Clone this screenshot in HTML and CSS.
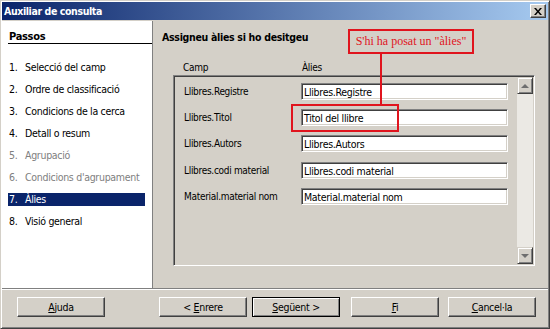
FILE: index.html
```html
<!DOCTYPE html>
<html lang="ca">
<head>
    <meta charset="UTF-8">
    <title>Auxiliar de consulta</title>
    <link rel="stylesheet" href="styles.css">
</head>
<body>
    <div class="window">
        <div class="titlebar">
            <span class="title">Auxiliar de consulta</span>
            <button class="close" aria-label="Tanca">
                <svg width="8" height="7" viewBox="0 0 8 7">
                    <path d="M0 0h2l2 2.5L6 0h2L5 3.5 8 7H6L4 4.5 2 7H0l3-3.5z" fill="#000"/>
                </svg>
            </button>
        </div>

        <div class="main">
            <nav class="steps">
                <div class="steps-title">Passos</div>
                <ol class="step-list">
                    <li class="step"><span class="step-label"><span class="num">1.</span>Selecció del camp</span></li>
                    <li class="step"><span class="step-label"><span class="num">2.</span>Ordre de classificació</span></li>
                    <li class="step"><span class="step-label"><span class="num">3.</span>Condicions de la cerca</span></li>
                    <li class="step"><span class="step-label"><span class="num">4.</span>Detall o resum</span></li>
                    <li class="step disabled"><span class="step-label"><span class="num">5.</span>Agrupació</span></li>
                    <li class="step disabled"><span class="step-label"><span class="num">6.</span>Condicions d'agrupament</span></li>
                    <li class="step current"><span class="step-label"><span class="num">7.</span>Àlies</span></li>
                    <li class="step"><span class="step-label"><span class="num">8.</span>Visió general</span></li>
                </ol>
            </nav>

            <section class="content">
                <div class="content-title">Assigneu àlies si ho desitgeu</div>
                <div class="columns">
                    <span>Camp</span>
                    <span>Àlies</span>
                </div>
                <div class="alias-box">
                    <div class="alias-rows">
                        <div class="alias-row">
                            <span class="field">Llibres.Registre</span>
                            <span class="text-input">Llibres.Registre</span>
                        </div>
                        <div class="alias-row">
                            <span class="field">Llibres.Titol</span>
                            <span class="text-input">Titol del llibre</span>
                        </div>
                        <div class="alias-row">
                            <span class="field">Llibres.Autors</span>
                            <span class="text-input">Llibres.Autors</span>
                        </div>
                        <div class="alias-row">
                            <span class="field">Llibres.codi material</span>
                            <span class="text-input">Llibres.codi material</span>
                        </div>
                        <div class="alias-row">
                            <span class="field">Material.material nom</span>
                            <span class="text-input">Material.material nom</span>
                        </div>
                    </div>
                    <div class="scrollbar">
                        <div class="scroll-btn"><span class="arrow up"></span></div>
                        <div class="scroll-track"></div>
                        <div class="scroll-btn"><span class="arrow down"></span></div>
                    </div>
                </div>
            </section>
        </div>

        <div class="divider"></div>

        <div class="footer">
            <button class="btn"><u>A</u>juda</button>
            <button class="btn btn-back">&lt; <u>E</u>nrere</button>
            <button class="btn btn-default"><u>S</u>egüent &gt;</button>
            <button class="btn btn-finish"><u>F</u>i</button>
            <button class="btn btn-cancel"><u>C</u>ancel·la</button>
        </div>

        <!-- anotació sobre la captura -->
        <div class="callout">S'hi ha posat un "àlies"</div>
        <div class="callout-line"></div>
        <div class="callout-target"></div>
    </div>
</body>
</html>
```

FILE: styles.css
```css
* {
    margin: 0;
    padding: 0;
    box-sizing: border-box;
}

body {
    font-family: "DejaVu Sans Condensed", "DejaVu Sans", sans-serif;
    font-stretch: condensed;
    font-size: 10px;
    letter-spacing: -0.3px;
    color: #000;
    background: #d4d0c8;
}

.window {
    position: relative;
    width: 550px;
    height: 329px;
    padding: 1px;
    background: #d4d0c8;
    border: 1px solid;
    border-color: #d4d0c8 #404040 #404040 #d4d0c8;
    box-shadow: inset 1px 1px #fff, inset -1px -1px #808080;
}

.titlebar {
    height: 18px;
    display: flex;
    align-items: center;
    justify-content: space-between;
    padding: 0 2px;
    background: linear-gradient(to right, #0a246a, #a6caf0);
}

.title {
    color: #fff;
    font-weight: bold;
    font-size: 10.5px;
    letter-spacing: -0.4px;
}

.close {
    width: 16px;
    height: 14px;
    display: flex;
    align-items: center;
    justify-content: center;
    background: #d4d0c8;
    border: 1px solid;
    border-color: #fff #404040 #404040 #fff;
    box-shadow: inset -1px -1px #808080;
}

.main {
    margin-top: 1px;
    height: 267px;
    display: flex;
}

.steps {
    width: 151px;
    background: #fff;
    border-right: 1px solid #808080;
    padding-left: 6px;
}

.steps-title {
    margin-top: 9px;
    line-height: 13px;
    font-size: 11px;
    font-weight: bold;
    border-bottom: 1px solid #000;
    padding-left: 1px;
}

.step-list {
    list-style: none;
    margin-top: 12px;
}

.step {
    height: 22px;
    display: flex;
    align-items: center;
}

.step-label {
    display: flex;
    width: 137px;
    height: 13px;
    line-height: 13px;
    padding-left: 1px;
    font-size: 10.5px;
}

.num {
    width: 16px;
}

.step.disabled {
    color: #808080;
}

.step.current .step-label {
    background: #0a246a;
    color: #fff;
}

.content {
    flex: 1;
    padding: 10px 0 0 9px;
}

.content-title {
    font-weight: bold;
    font-size: 10.5px;
    line-height: 13px;
}

.columns {
    display: grid;
    grid-template-columns: 119px auto;
    margin-top: 17px;
    padding-left: 21px;
    line-height: 13px;
}

.alias-box {
    display: flex;
    margin: 1px 0 0 11px;
    width: 362px;
    height: 191px;
    border: 1px solid;
    border-color: #808080 #fff #fff #808080;
    box-shadow: inset 1px 1px #404040, inset -1px -1px #d4d0c8;
}

.alias-rows {
    flex: 1;
    padding: 2px 0 0 10px;
}

.alias-row {
    height: 26.3px;
    display: flex;
    align-items: center;
}

.field {
    width: 117px;
}

.text-input {
    width: 207px;
    height: 17px;
    line-height: 14px;
    padding-left: 2px;
    background: #fff;
    border: 1px solid;
    border-color: #808080 #fff #fff #808080;
    box-shadow: inset 1px 1px #404040, inset -1px -1px #d4d0c8;
    padding-top: 1px;
    font-size: 10.5px;
}

.scrollbar {
    width: 16px;
    margin: 1px 1px 1px 0;
    display: flex;
    flex-direction: column;
}

.scroll-btn {
    height: 17px;
    display: flex;
    align-items: center;
    justify-content: center;
    background: #d4d0c8;
    border: 1px solid;
    border-color: #d4d0c8 #404040 #404040 #d4d0c8;
    box-shadow: inset 1px 1px #fff, inset -1px -1px #808080;
}

.scroll-track {
    flex: 1;
    background: #ebe9e4;
}

.arrow {
    width: 0;
    height: 0;
    border-left: 4px solid transparent;
    border-right: 4px solid transparent;
}

.arrow.up {
    border-bottom: 4px solid #6e6e6e;
}

.arrow.down {
    border-top: 4px solid #6e6e6e;
}

.divider {
    height: 2px;
    border-top: 1px solid #808080;
    border-bottom: 1px solid #fff;
}

.footer {
    display: flex;
    padding: 7px 0 0 15px;
}

.btn {
    width: 88px;
    height: 20px;
    font-family: inherit;
    font-stretch: condensed;
    font-size: 10.5px;
    letter-spacing: -0.3px;
    color: #000;
    background: #d4d0c8;
    border: 1px solid;
    border-color: #fff #404040 #404040 #fff;
    box-shadow: inset -1px -1px #808080;
}

.btn-back {
    margin-left: 54px;
}

.btn-default {
    margin-left: 5px;
    border-color: #000;
    box-shadow: inset 1px 1px #fff, inset -1px -1px #808080;
}

.btn-finish {
    margin-left: 11px;
}

.btn-cancel {
    margin-left: 9px;
}

.callout {
    position: absolute;
    left: 347px;
    top: 28px;
    width: 126px;
    height: 25px;
    border: 2px solid #e0141e;
    color: #e0141e;
    font-family: "Liberation Serif", serif;
    font-size: 12px;
    letter-spacing: 0;
    display: flex;
    align-items: center;
    justify-content: center;
}

.callout-line {
    position: absolute;
    left: 379px;
    top: 53px;
    width: 2px;
    height: 51px;
    background: #e0141e;
}

.callout-target {
    position: absolute;
    left: 290px;
    top: 103px;
    width: 108px;
    height: 28px;
    border: 2px solid #e0141e;
}
```
